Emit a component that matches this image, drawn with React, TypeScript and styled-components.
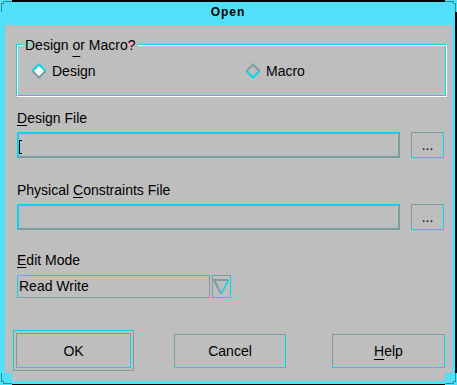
import React from 'react'
import styled, { createGlobalStyle } from 'styled-components'

const FRAME = '#50e0f8'
const LIGHT = '#00d8ec'
const SHADE = '#7b9d9d'
const FACE = '#bebebe'
const DARK = '#2a8c9a'

const GlobalStyle = createGlobalStyle`
  html, body {
    margin: 0;
    padding: 0;
    background: ${FACE};
  }
  body {
    font-family: 'Liberation Sans', Arial, sans-serif;
    font-size: 14px;
    color: #000;
  }
`

const Window = styled.div`
  position: relative;
  width: 457px;
  height: 385px;
  box-sizing: border-box;
  border-top: 2px solid #000;
  border-right: 2px solid #000;
  border-bottom: 1px solid #000;
  background: ${FRAME};
  display: flex;
  flex-direction: column;
`

const TitleBar = styled.div`
  height: 23px;
  line-height: 20px;
  padding-left: 1px;
  text-align: center;
  font-size: 12px;
  font-weight: bold;
  letter-spacing: 1px;
`

const Corner = styled.svg<{ $v: 'top' | 'bottom'; $h: 'left' | 'right' }>`
  position: absolute;
  width: 12px;
  height: 12px;
  ${p => (p.$v === 'top' ? 'top: -2px;' : 'bottom: -1px;')}
  ${p => (p.$h === 'left' ? 'left: 0;' : 'right: -2px;')}
`

const Body = styled.div`
  flex: 1;
  margin: 0 3px 3px 5px;
  background: ${FACE};
  display: flex;
  flex-direction: column;
`

const Group = styled.div`
  position: relative;
  margin: 19px 5px 0 11px;
  height: 53px;
  box-sizing: border-box;
  border: 1px solid;
  border-color: ${LIGHT} #fff #fff ${LIGHT};
  box-shadow: inset 1px 1px 0 #fff, inset -1px -1px 0 ${LIGHT};
  padding: 18px 0 0 14px;
`

const Legend = styled.div`
  position: absolute;
  top: -8px;
  left: 6px;
  padding: 0 2px;
  line-height: 16px;
  background: ${FACE};
`

const Mnemonic = styled.span<{ $offset?: number }>`
  text-decoration: underline;
  text-decoration-thickness: 1px;
  text-underline-offset: ${p => p.$offset ?? 2}px;
`

const RadioRow = styled.div`
  display: grid;
  grid-template-columns: 214px auto;
  height: 16px;
`

const Radio = styled.div`
  display: flex;
  align-items: center;
  gap: 5px;
  line-height: 16px;
`

const Label = styled.div<{ $top: number }>`
  margin: ${p => p.$top}px 0 0 12px;
  line-height: 16px;
`

const FieldRow = styled.div`
  display: flex;
  gap: 11px;
  margin: 6px 8px 0 12px;
`

const TextField = styled.div`
  flex: 1;
  height: 26px;
  box-sizing: border-box;
  border: 2px solid;
  border-color: ${LIGHT} ${SHADE} ${SHADE} ${LIGHT};
  display: flex;
  align-items: flex-start;
`

const Cursor = styled.span`
  width: 2px;
  height: 12px;
  margin-top: 6px;
  border: 1px solid #000;
  border-right: none;
`

const BrowseButton = styled.button`
  width: 33px;
  height: 26px;
  box-sizing: border-box;
  padding: 0;
  border: 1px solid;
  border-color: ${SHADE} ${LIGHT} ${LIGHT} ${SHADE};
  background: ${FACE};
  font: inherit;
  color: #000;
`

const SelectRow = styled.div`
  display: flex;
  gap: 2px;
  margin: 7px 0 0 12px;
`

const SelectBox = styled.div`
  width: 193px;
  height: 23px;
  box-sizing: border-box;
  border: 1px solid;
  border-color: ${LIGHT} ${SHADE} ${SHADE} ${LIGHT};
  padding-left: 1px;
  line-height: 21px;
`

const ArrowButton = styled.div`
  width: 19px;
  height: 23px;
  box-sizing: border-box;
  border: 1px solid;
  border-color: ${SHADE} ${LIGHT} ${LIGHT} ${SHADE};
  display: flex;
`

const ButtonRow = styled.div`
  display: flex;
  align-items: center;
  height: 41px;
  margin: 32px 0 0 8px;
`

const DefaultFrame = styled.div`
  width: 121px;
  height: 41px;
  box-sizing: border-box;
  border: 1px solid;
  border-color: ${LIGHT} ${SHADE} ${SHADE} ${LIGHT};
  padding: 2px;
  display: flex;
`

const PushButton = styled.button<{ $width?: number; $left?: number }>`
  width: ${p => (p.$width ? `${p.$width}px` : '100%')};
  height: ${p => (p.$width ? '34px' : '100%')};
  margin-left: ${p => p.$left ?? 0}px;
  box-sizing: border-box;
  padding: 0;
  border: 1px solid;
  border-color: ${SHADE} ${LIGHT} ${LIGHT} ${SHADE};
  background: ${FACE};
  font: inherit;
  color: #000;
`

const Diamond = ({ on }: { on: boolean }) => (
  <svg width="16" height="16" viewBox="0 0 16 16">
    <polygon points="8,1.5 14.5,8 8,14.5 1.5,8" fill={on ? '#fff' : FACE} />
    <polyline points="1.5,8 8,1.5 14.5,8" fill="none" stroke={on ? LIGHT : SHADE} strokeWidth="2" />
    <polyline points="1.5,8 8,14.5 14.5,8" fill="none" stroke={on ? SHADE : LIGHT} strokeWidth="2" />
  </svg>
)

const corners: { v: 'top' | 'bottom'; h: 'left' | 'right'; d: string }[] = [
  { v: 'top', h: 'left', d: 'M1.5 12 V3.5 H3.5 V1.5 H12' },
  { v: 'top', h: 'right', d: 'M0 1.5 H8.5 V3.5 H10.5 V12' },
  { v: 'bottom', h: 'left', d: 'M1.5 0 V8.5 H3.5 V10.5 H12' },
  { v: 'bottom', h: 'right', d: 'M0 10.5 H8.5 V8.5 H10.5 V0' },
]

export default function App() {
  return (
    <>
      <GlobalStyle />
      <Window>
        {corners.map(c => (
          <Corner key={c.v + c.h} $v={c.v} $h={c.h} viewBox="0 0 12 12">
            <rect width="12" height="12" fill={FRAME} />
            <path d={c.d} fill="none" stroke={DARK} strokeWidth="1" />
          </Corner>
        ))}
        <TitleBar>Open</TitleBar>
        <Body>
          <Group>
            <Legend>
              Design <Mnemonic $offset={6}>o</Mnemonic>r Macro?
            </Legend>
            <RadioRow>
              <Radio>
                <Diamond on />
                Design
              </Radio>
              <Radio>
                <Diamond on={false} />
                Macro
              </Radio>
            </RadioRow>
          </Group>

          <Label $top={13}>
            <Mnemonic>D</Mnemonic>esign File
          </Label>
          <FieldRow>
            <TextField>
              <Cursor />
            </TextField>
            <BrowseButton>...</BrowseButton>
          </FieldRow>

          <Label $top={24}>
            Physical <Mnemonic>C</Mnemonic>onstraints File
          </Label>
          <FieldRow>
            <TextField />
            <BrowseButton>...</BrowseButton>
          </FieldRow>

          <Label $top={22}>
            <Mnemonic>E</Mnemonic>dit Mode
          </Label>
          <SelectRow>
            <SelectBox>Read Write</SelectBox>
            <ArrowButton>
              <svg width="17" height="21" viewBox="0 0 17 21">
                <polyline points="15,4 1,4 8,17.5" fill="none" stroke={SHADE} strokeWidth="2" />
                <line x1="15.5" y1="4" x2="8.5" y2="17.5" stroke={LIGHT} strokeWidth="1.5" />
              </svg>
            </ArrowButton>
          </SelectRow>

          <ButtonRow>
            <DefaultFrame>
              <PushButton>OK</PushButton>
            </DefaultFrame>
            <PushButton $width={112} $left={40}>Cancel</PushButton>
            <PushButton $width={113} $left={46}>
              <Mnemonic $offset={3}>H</Mnemonic>elp
            </PushButton>
          </ButtonRow>
        </Body>
      </Window>
    </>
  )
}
